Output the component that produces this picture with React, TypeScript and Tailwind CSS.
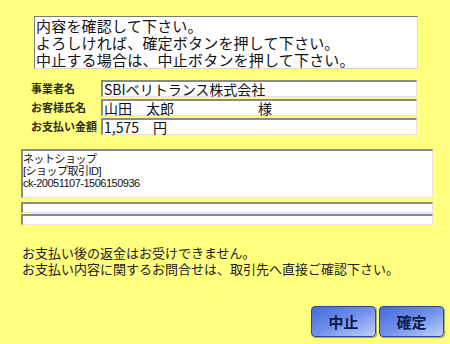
import React from "react";

const jp = "font-['Noto_Sans_CJK_JP',sans-serif]";

const fields = [
  { label: "事業者名", value: "SBIベリトランス株式会社" },
  { label: "お客様氏名", value: "山田　太郎　　　　　　様" },
  { label: "お支払い金額", value: "1,575　円" },
];

const inset = "bg-white border-t-2 border-l-2 border-t-[#8a8a8a] border-l-[#8a8a8a] border-r border-b border-r-[#e4e4e4] border-b-[#e4e4e4]";

function Btn({ children }: { children: React.ReactNode }) {
  return (
    <button className="w-[65px] h-[31px] rounded-[4px] border border-[#2a47a0] bg-gradient-to-br from-[#4668dc] via-[#7090ec] to-[#c4d2fa] shadow-[1px_1px_1px_rgba(0,0,0,0.35)] text-[15px] font-bold text-[#0c1a48] leading-none">
      {children}
    </button>
  );
}

export default function App() {
  return (
    <div className={`w-[450px] h-[344px] bg-[#ffff80] flex flex-col ${jp} text-[#111]`}>
      <div className="ml-[34px] mt-[16px] w-[384px] h-[53px] bg-white border border-t-[#7a7a7a] border-l-[#7a7a7a] border-r-[#d8d8d8] border-b-[#d8d8d8] pl-[1px] text-[15px] leading-[17px] tracking-[0.2px]">
        <p>内容を確認して下さい。</p>
        <p>よろしければ、確定ボタンを押して下さい。</p>
        <p>中止する場合は、中止ボタンを押して下さい。</p>
      </div>

      <div className="mt-[11px] ml-[31px] flex flex-col gap-[2px]">
        {fields.map((f) => (
          <div key={f.label} className="flex items-center h-[17px]">
            <span className="w-[70px] text-[11px] font-bold text-[#2e2e1a] leading-none whitespace-nowrap">{f.label}</span>
            <div className={`w-[316px] h-[17px] ${inset} pl-[1px] text-[14px] leading-[14px] whitespace-nowrap`}>
              {f.value}
            </div>
          </div>
        ))}
      </div>

      <div className={`mt-[14px] ml-[21px] w-[412px] h-[49px] ${inset} pt-[2px] text-[11px] leading-[12px] font-['Liberation_Sans','Noto_Sans_CJK_JP',sans-serif] tracking-[-0.5px]`}>
        <p>ネットショップ</p>
        <p>[ショップ取引ID]</p>
        <p>ck-20051107-1506150936</p>
      </div>
      <div className={`mt-[4px] ml-[21px] w-[412px] h-[11px] ${inset}`} />
      <div className={`mt-[1px] ml-[21px] w-[412px] h-[11px] ${inset}`} />

      <div className="mt-[20px] ml-[22px] text-[13px] leading-[16px] text-[#222]">
        <p>お支払い後の返金はお受けできません。</p>
        <p>お支払い内容に関するお問合せは、取引先へ直接ご確認下さい。</p>
      </div>

      <div className="mt-auto mb-[7px] mr-[6px] flex justify-end gap-[3px]">
        <Btn>中止</Btn>
        <Btn>確定</Btn>
      </div>
    </div>
  );
}
